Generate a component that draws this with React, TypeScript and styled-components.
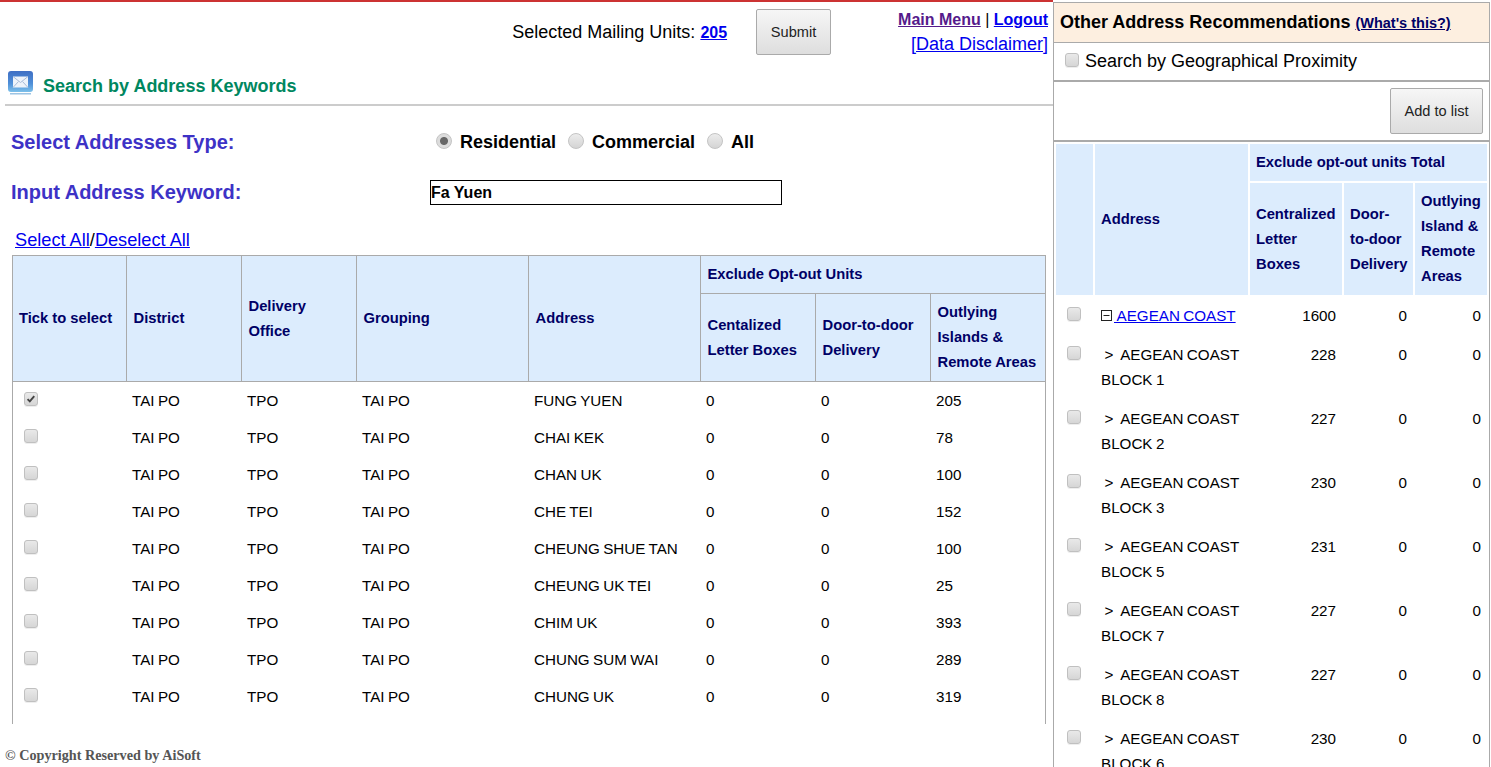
import React from "react";
import styled, { createGlobalStyle } from "styled-components";

const Global = createGlobalStyle`
  html, body { margin: 0; padding: 0; background: #fff; height: 767px; overflow: hidden; }
  body { font-family: "Liberation Sans", Arial, sans-serif; color: #000; }
  * { box-sizing: border-box; }
`;

const Page = styled.div`
  display: flex;
  width: 1491px;
  height: 767px;
  overflow: hidden;
`;

const LeftColumn = styled.main`
  flex: 0 0 1053px;
  height: 767px;
  border-top: 2px solid #cc3333;
  position: relative;
`;

const TopBar = styled.div`
  display: flex;
  justify-content: flex-end;
  height: 62px;
  padding: 5px 5px 0 0;
`;

const UnitsBlock = styled.div`
  display: flex;
  align-items: flex-start;
  gap: 29px;
  margin-right: 67px;
  padding-top: 2px;
`;

const UnitsText = styled.div`
  font-size: 18px;
  line-height: 46px;
  margin-top: 0;
  height: 46px;
`;

const BoldLink = styled.a`
  font-size: 16px;
  font-weight: bold;
  color: ${(p) => p.color || "#0000ee"};
  text-decoration: underline;
`;

const GreyButton = styled.button`
  width: ${(p: { $w: number }) => p.$w}px;
  height: 46px;
  border: 1px solid #aaa;
  border-radius: 2px;
  background: linear-gradient(#f6f6f6, #dedede);
  font-family: "Liberation Sans", Arial, sans-serif;
  font-size: 14.6px;
  color: #222;
  padding: 0;
`;

const NavLinks = styled.div`
  text-align: right;
  font-size: 16px;
  line-height: 25px;
`;

const PlainLink = styled.a`
  color: #0000ee;
  text-decoration: underline;
`;

const DisclaimerLink = styled(PlainLink)`
  font-size: 18px;
`;

const TitleRow = styled.div`
  display: flex;
  align-items: flex-start;
  margin-left: 5px;
  height: 42px;
  border-bottom: 2px solid #ccc;
  padding: 6px 0 0 2px;
  gap: 9px;
`;

const PageTitle = styled.h1`
  margin: 6px 0 0;
  font-size: 18px;
  line-height: 21px;
  font-weight: bold;
  color: #00875f;
`;

const FormGrid = styled.div`
  display: grid;
  grid-template-columns: 419px 1fr;
  grid-auto-rows: 50px;
  padding: 11px 0 0 11px;
  align-items: center;
`;

const FieldLabel = styled.div`
  font-size: 20px;
  font-weight: bold;
  color: #3d32c6;
`;

const RadioGroup = styled.div`
  display: flex;
  align-items: center;
  padding-left: 6px;
`;

const RadioInput = styled.input.attrs({ type: "radio" })`
  appearance: none;
  width: 16px;
  height: 16px;
  margin: 0 8px 2px 0;
  border-radius: 50%;
  border: 1px solid #c4c4c4;
  background: linear-gradient(#ececec, #d4d4d4);
  &:checked {
    background: radial-gradient(circle, #666 0 3.5px, #dcdcdc 4.5px);
  }
`;

const RadioLabel = styled.label`
  font-size: 18px;
  font-weight: bold;
  margin-right: 12px;
`;

const KeywordInput = styled.input`
  width: 352px;
  height: 25px;
  border: 1px solid #000;
  padding: 1px 0 0;
  font-family: "Liberation Sans", Arial, sans-serif;
  font-size: 16px;
  font-weight: bold;
  color: #000;
  outline: none;
`;

const SelectLinks = styled.div`
  font-size: 18.2px;
  line-height: 18px;
  margin: 14px 0 0 15px;
  height: 24px;
`;

const TableFrame = styled.div`
  margin-left: 12px;
  width: 1034px;
  height: 469px;
  overflow: hidden;
  border: 1px solid #aaa;
  border-bottom: none;
`;

const MainTable = styled.table`
  border-collapse: collapse;
  table-layout: fixed;
  width: 1032px;
`;

const MainHead = styled.th`
  background: #dcecfd;
  color: #000066;
  font-size: 14.75px;
  font-weight: bold;
  line-height: 25px;
  text-align: left;
  padding: 6px 5px 6px 7px;
  border-right: 1px solid #aaa;
  border-bottom: 1px solid #aaa;
  &:last-child { border-right: none; }
`;

const TickHead = styled(MainHead)`
  padding-left: 6px;
`;

const MainCell = styled.td`
  font-size: 15.2px;
  word-spacing: -0.8px;
  line-height: 25px;
  padding: 6px 5px 6px 6px;
  height: 37px;
`;

const CheckCell = styled(MainCell)`
  padding: 0 0 0 11px;
  line-height: 0;
`;

const CheckBox = styled.input.attrs({ type: "checkbox" })`
  appearance: none;
  display: inline-block;
  width: 14px;
  height: 14px;
  margin: 0;
  border: 1px solid #c0c0c0;
  border-radius: 3px;
  background: linear-gradient(#e9e9e9, #d6d6d6);
  box-shadow: 0 1px 0 #eee;
  &:checked {
    background: url("data:image/svg+xml,%3Csvg xmlns='http://www.w3.org/2000/svg' viewBox='0 0 14 14'%3E%3Cpath d='M3 7.2l2.6 2.6L10.8 3.6' fill='none' stroke='%23444' stroke-width='2.2'/%3E%3C/svg%3E") center/100% no-repeat, linear-gradient(#e9e9e9, #d6d6d6);
  }
`;

const RaisedCheck = styled(CheckBox)`
  position: relative;
  top: -2px;
`;

const ProximityCheck = styled(CheckBox)`
  align-self: flex-start;
  margin-top: 10px;
`;

const Footer = styled.div`
  position: absolute;
  left: 5px;
  top: 745px;
  font-family: "Liberation Serif", "Times New Roman", serif;
  font-weight: bold;
  font-size: 14.2px;
  color: #555;
`;

const SidePanel = styled.aside`
  flex: 0 0 437px;
  height: 765px;
  margin-top: 2px;
  border: 1px solid #aaa;
  border-bottom: none;
  overflow: hidden;
`;

const SideTitle = styled.div`
  height: 40px;
  background: #fdefe0;
  border-bottom: 1px solid #aaa;
  padding-left: 6px;
  line-height: 38px;
  font-size: 18px;
  font-weight: bold;
  white-space: nowrap;
`;

const WhatsThis = styled.a`
  font-size: 14.5px;
  color: #000066;
  text-decoration: underline;
`;

const ProximityRow = styled.div`
  display: flex;
  align-items: center;
  height: 39px;
  border-bottom: 2px solid #aaa;
  padding: 0 0 0 11px;
  font-size: 18px;
  gap: 6px;
`;

const ActionRow = styled.div`
  display: flex;
  justify-content: flex-end;
  align-items: center;
  height: 60px;
  border-bottom: 2px solid #aaa;
  padding: 0 6px 0 0;
`;

const SideTable = styled.table`
  border-collapse: separate;
  border-spacing: 2px;
  table-layout: fixed;
  width: 435px;
`;

const SideHead = styled.th`
  background: #dcecfd;
  color: #000066;
  font-size: 14.75px;
  font-weight: bold;
  line-height: 25px;
  text-align: left;
  padding: 6px;
`;

const SideCell = styled.td`
  font-size: 15.2px;
  word-spacing: -0.8px;
  line-height: 25px;
  padding: 6px;
  vertical-align: top;
  text-align: ${(p: { $num?: boolean }) => (p.$num ? "right" : "left")};
`;

const SideCheckCell = styled.td`
  padding: 10px 0 0 11px;
  vertical-align: top;
  line-height: 0;
`;

const MinusBox = styled.svg`
  width: 12px;
  height: 12px;
  margin-right: 1px;
  vertical-align: -1px;
`;

const mainRows = [
  ["FUNG YUEN", "205", true],
  ["CHAI KEK", "78"],
  ["CHAN UK", "100"],
  ["CHE TEI", "152"],
  ["CHEUNG SHUE TAN", "100"],
  ["CHEUNG UK TEI", "25"],
  ["CHIM UK", "393"],
  ["CHUNG SUM WAI", "289"],
  ["CHUNG UK", "319"],
] as [string, string, boolean?][];

const blocks: [string, string][] = [
  ["1", "228"],
  ["2", "227"],
  ["3", "230"],
  ["5", "231"],
  ["7", "227"],
  ["8", "227"],
  ["6", "230"],
];

const MailIcon = () => (
  <svg width="27" height="26" viewBox="0 0 27 26">
    <defs>
      <linearGradient id="mailBg" x1="0" y1="0" x2="0" y2="1">
        <stop offset="0" stopColor="#3f6fc4" />
        <stop offset="0.6" stopColor="#4f8fd8" />
        <stop offset="1" stopColor="#7cc0ea" />
      </linearGradient>
    </defs>
    <rect x="1" y="1" width="25" height="21" rx="3" fill="url(#mailBg)" />
    <rect x="6" y="6.5" width="15" height="11" fill="#eef3fa" />
    <path d="M6 6.5l7.5 6 7.5-6M6 17.5l5.5-6M21 17.5l-5.5-6" fill="none" stroke="#a9bcd8" strokeWidth="1" />
    <rect x="3" y="23" width="21" height="1.5" fill="#9cc4e4" />
  </svg>
);

export default function App() {
  return (
    <Page>
      <Global />
      <LeftColumn>
        <TopBar>
          <UnitsBlock>
            <UnitsText>
              Selected Mailing Units: <BoldLink href="#">205</BoldLink>
            </UnitsText>
            <GreyButton $w={75}>Submit</GreyButton>
          </UnitsBlock>
          <NavLinks>
            <BoldLink href="#" color="#551a8b">Main Menu</BoldLink> | <BoldLink href="#">Logout</BoldLink>
            <br />
            <DisclaimerLink href="#">[Data Disclaimer]</DisclaimerLink>
          </NavLinks>
        </TopBar>
        <TitleRow>
          <MailIcon />
          <PageTitle>Search by Address Keywords</PageTitle>
        </TitleRow>
        <FormGrid>
          <FieldLabel>Select Addresses Type:</FieldLabel>
          <RadioGroup>
            <RadioInput name="t" defaultChecked id="r1" />
            <RadioLabel htmlFor="r1">Residential</RadioLabel>
            <RadioInput name="t" id="r2" />
            <RadioLabel htmlFor="r2">Commercial</RadioLabel>
            <RadioInput name="t" id="r3" />
            <RadioLabel htmlFor="r3">All</RadioLabel>
          </RadioGroup>
          <FieldLabel>Input Address Keyword:</FieldLabel>
          <KeywordInput defaultValue="Fa Yuen" />
        </FormGrid>
        <SelectLinks>
          <PlainLink href="#">Select All</PlainLink>/<PlainLink href="#">Deselect All</PlainLink>
        </SelectLinks>
        <TableFrame>
          <MainTable>
            <colgroup>
              <col width="113" />
              <col width="115" />
              <col width="115" />
              <col width="172" />
              <col width="172" />
              <col width="115" />
              <col width="115" />
              <col width="115" />
            </colgroup>
            <thead>
              <tr>
                <TickHead rowSpan={2}>Tick to select</TickHead>
                <MainHead rowSpan={2}>District</MainHead>
                <MainHead rowSpan={2}>Delivery<br />Office</MainHead>
                <MainHead rowSpan={2}>Grouping</MainHead>
                <MainHead rowSpan={2}>Address</MainHead>
                <MainHead colSpan={3}>Exclude Opt-out Units</MainHead>
              </tr>
              <tr>
                <MainHead>Centalized Letter Boxes</MainHead>
                <MainHead>Door-to-door Delivery</MainHead>
                <MainHead>Outlying Islands &amp; Remote Areas</MainHead>
              </tr>
            </thead>
            <tbody>
              {mainRows.map(([addr, n, checked]) => (
                <tr key={addr}>
                  <CheckCell><RaisedCheck defaultChecked={!!checked} /></CheckCell>
                  <MainCell>TAI PO</MainCell>
                  <MainCell>TPO</MainCell>
                  <MainCell>TAI PO</MainCell>
                  <MainCell>{addr}</MainCell>
                  <MainCell>0</MainCell>
                  <MainCell>0</MainCell>
                  <MainCell>{n}</MainCell>
                </tr>
              ))}
            </tbody>
          </MainTable>
        </TableFrame>
        <Footer>© Copyright Reserved by AiSoft</Footer>
      </LeftColumn>
      <SidePanel>
        <SideTitle>
          Other Address Recommendations <WhatsThis href="#">(What's this?)</WhatsThis>
        </SideTitle>
        <ProximityRow>
          <ProximityCheck id="geo" />
          <label htmlFor="geo">Search by Geographical Proximity</label>
        </ProximityRow>
        <ActionRow>
          <GreyButton $w={93}>Add to list</GreyButton>
        </ActionRow>
        <SideTable>
          <colgroup>
            <col width="37" />
            <col width="153" />
            <col width="92" />
            <col width="69" />
            <col width="72" />
          </colgroup>
          <thead>
            <tr>
              <SideHead rowSpan={2}></SideHead>
              <SideHead rowSpan={2}>Address</SideHead>
              <SideHead colSpan={3}>Exclude opt-out units Total</SideHead>
            </tr>
            <tr>
              <SideHead>Centralized Letter Boxes</SideHead>
              <SideHead>Door-<br />to-door Delivery</SideHead>
              <SideHead>Outlying Island &amp; Remote Areas</SideHead>
            </tr>
          </thead>
          <tbody>
            <tr>
              <SideCheckCell><CheckBox /></SideCheckCell>
              <SideCell>
                <MinusBox viewBox="0 0 12 12">
                  <rect x="0.5" y="0.5" width="10" height="10" fill="none" stroke="#222" />
                  <path d="M2.5 5.5h6" stroke="#222" />
                </MinusBox>
                <PlainLink href="#"> AEGEAN COAST</PlainLink>
              </SideCell>
              <SideCell $num>1600</SideCell>
              <SideCell $num>0</SideCell>
              <SideCell $num>0</SideCell>
            </tr>
            {blocks.map(([b, n]) => (
              <tr key={b}>
                <SideCheckCell><CheckBox /></SideCheckCell>
                <SideCell>&nbsp;&gt;&nbsp;&nbsp;AEGEAN COAST BLOCK {b}</SideCell>
                <SideCell $num>{n}</SideCell>
                <SideCell $num>0</SideCell>
                <SideCell $num>0</SideCell>
              </tr>
            ))}
          </tbody>
        </SideTable>
      </SidePanel>
    </Page>
  );
}
